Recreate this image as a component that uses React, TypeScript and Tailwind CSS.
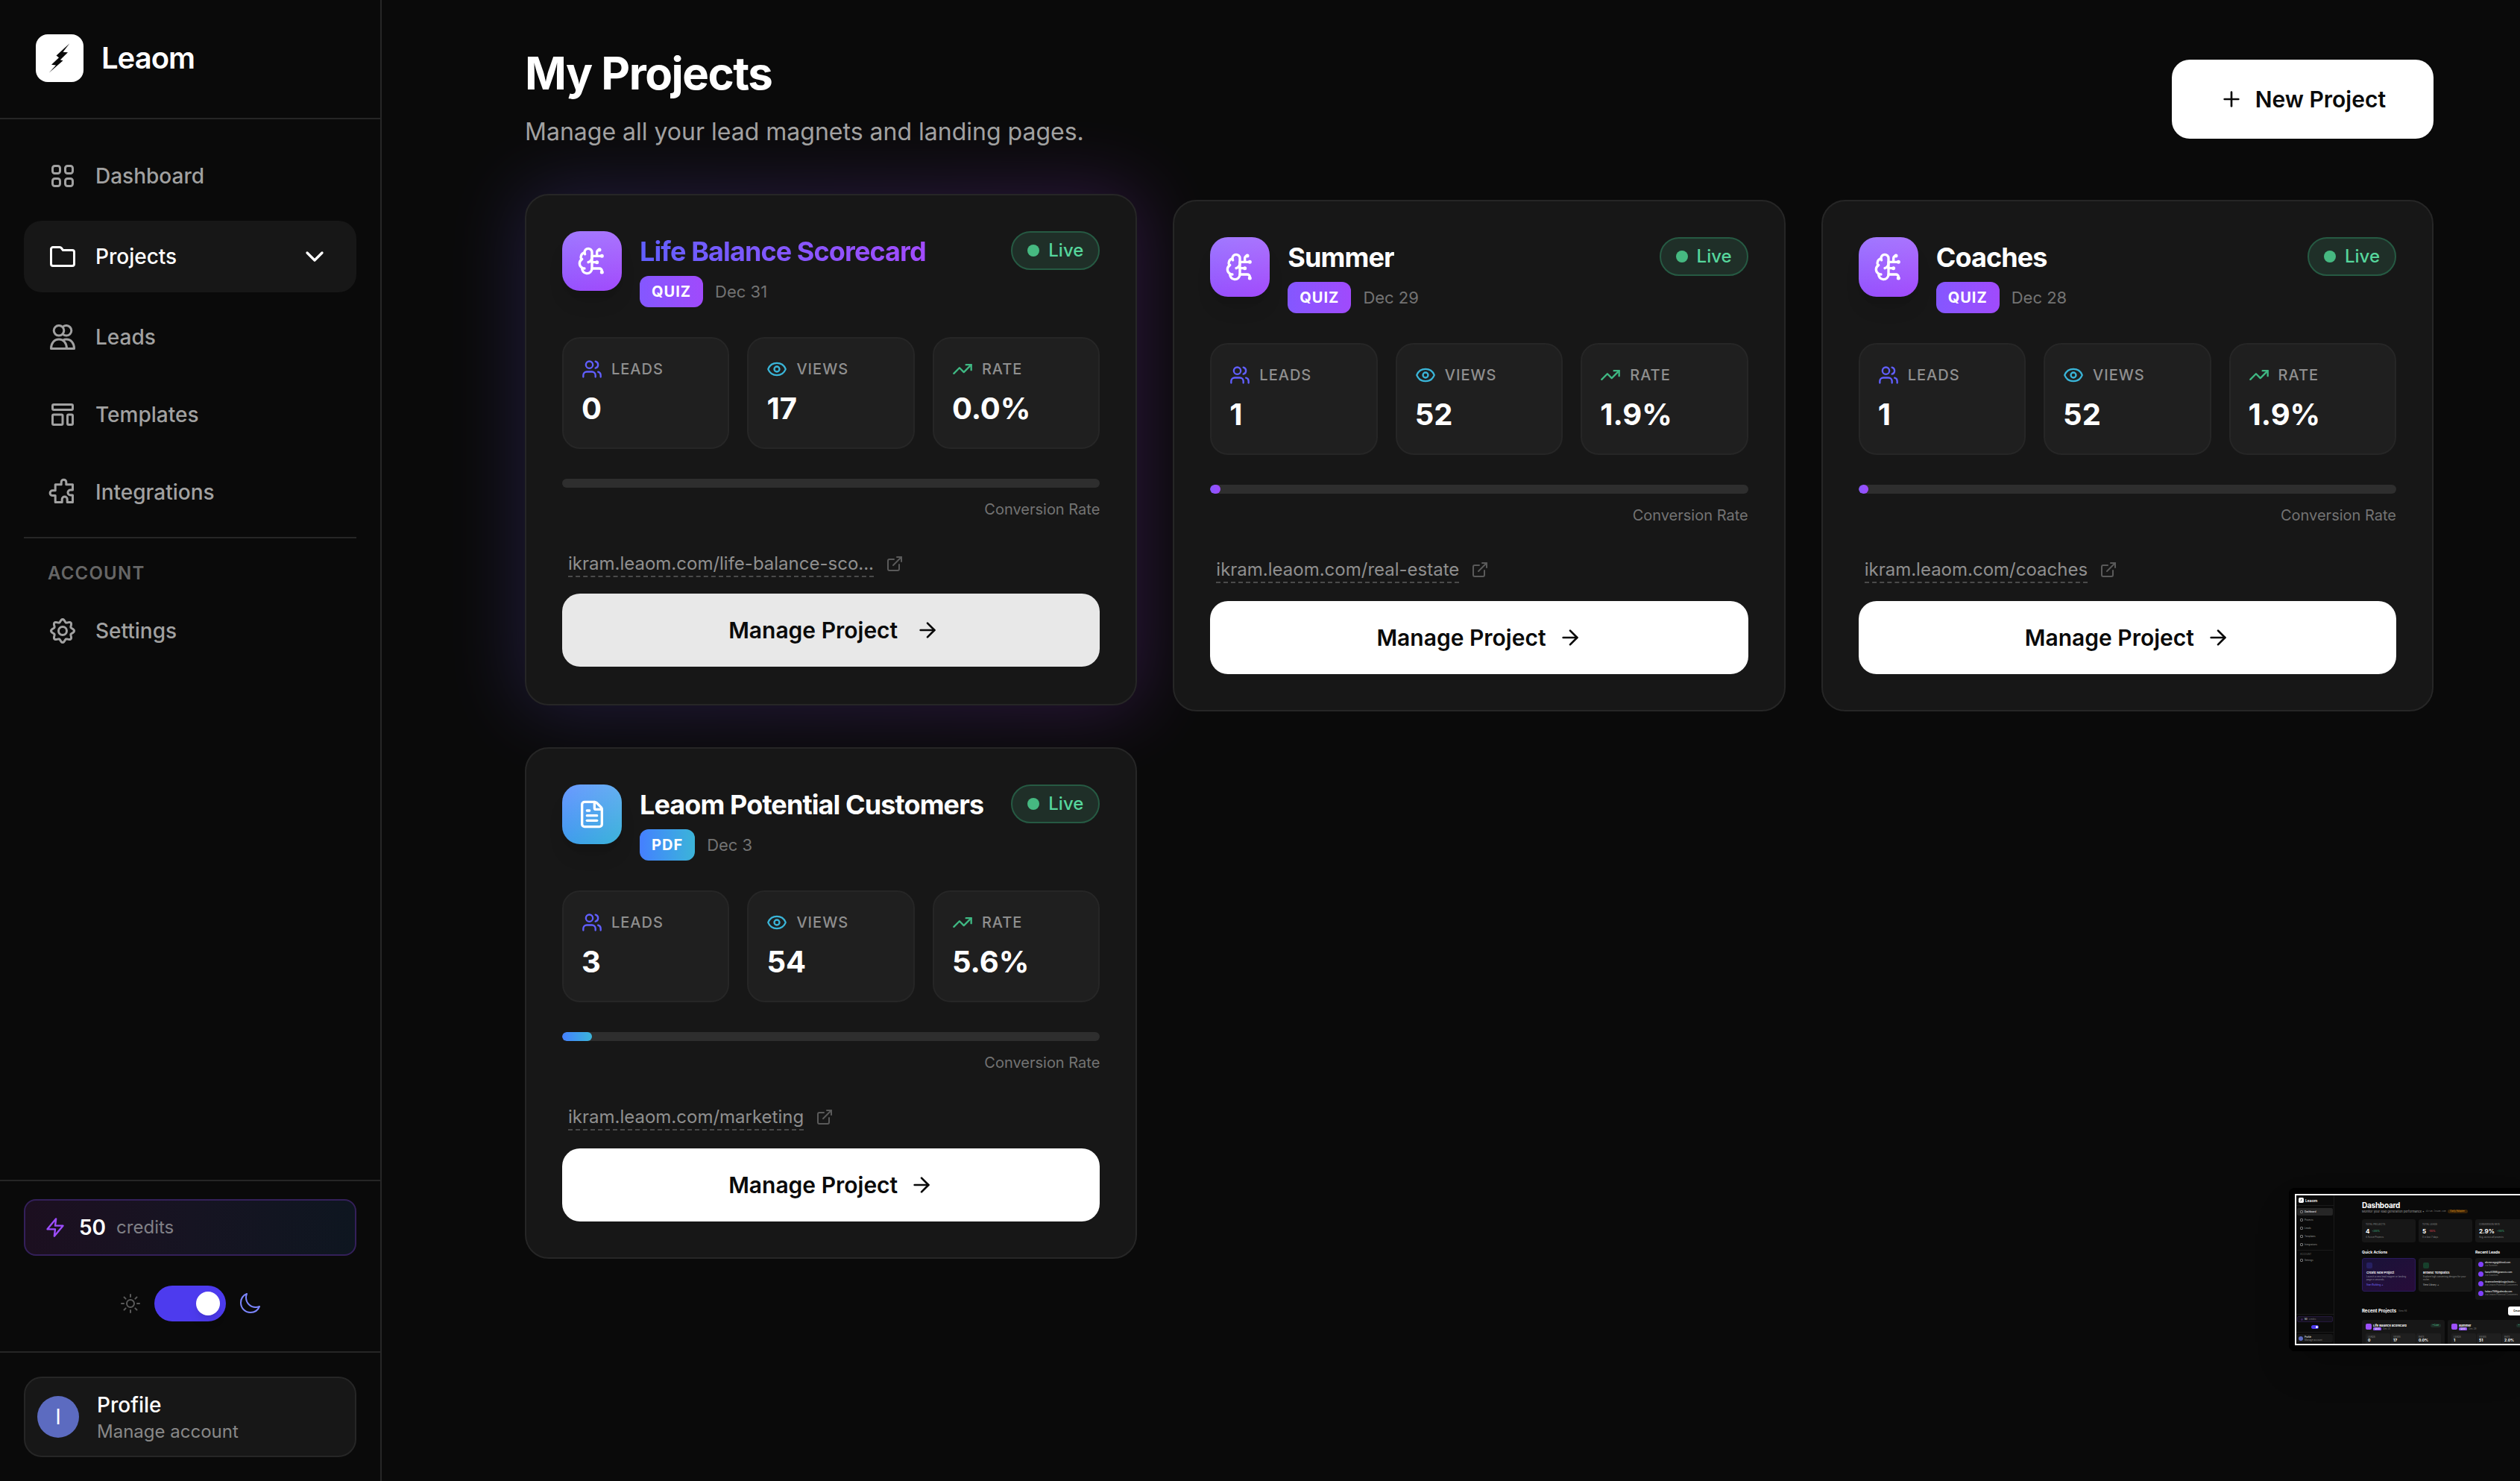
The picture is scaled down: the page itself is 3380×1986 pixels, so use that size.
import { ReactNode, useState } from 'react';
import {
  ArrowRight,
  BrainCircuit,
  ChevronDown,
  ExternalLink,
  Eye,
  FileText,
  Plus,
  TrendingUp,
  Users,
} from 'lucide-react';
import { HiOutlineMoon, HiOutlineSun } from 'react-icons/hi2';

type ProjectKind = 'quiz' | 'pdf';

interface Project {
  id: string;
  title: string;
  kind: ProjectKind;
  date: string;
  leads: number;
  views: number;
  rate: number;
  url: string;
  hovered?: boolean;
}

const projects: Project[] = [
  {
    id: 'life-balance',
    title: 'Life Balance Scorecard',
    kind: 'quiz',
    date: 'Dec 31',
    leads: 0,
    views: 17,
    rate: 0,
    url: 'ikram.leaom.com/life-balance-sco...',
    hovered: true,
  },
  {
    id: 'summer',
    title: 'Summer',
    kind: 'quiz',
    date: 'Dec 29',
    leads: 1,
    views: 52,
    rate: 1.9,
    url: 'ikram.leaom.com/real-estate',
  },
  {
    id: 'coaches',
    title: 'Coaches',
    kind: 'quiz',
    date: 'Dec 28',
    leads: 1,
    views: 52,
    rate: 1.9,
    url: 'ikram.leaom.com/coaches',
  },
  {
    id: 'potential-customers',
    title: 'Leaom Potential Customers',
    kind: 'pdf',
    date: 'Dec 3',
    leads: 3,
    views: 54,
    rate: 5.6,
    url: 'ikram.leaom.com/marketing',
  },
];

/* ---------- Icons ---------- */

function NavIcon({ children }: { children: ReactNode }) {
  return (
    <svg
      viewBox="0 0 40 40"
      className="w-10 h-10 shrink-0"
      fill="none"
      stroke="currentColor"
      strokeWidth="3"
      strokeLinecap="round"
      strokeLinejoin="round"
      aria-hidden="true"
    >
      {children}
    </svg>
  );
}

const gearPoints = Array.from({ length: 96 }, (_, i) => {
  const a = (i / 96) * Math.PI * 2;
  const r = 13.7 + 1.8 * Math.cos(a * 8);
  return `${(20 + r * Math.cos(a)).toFixed(2)},${(20 + r * Math.sin(a)).toFixed(2)}`;
}).join(' ');

const icons = {
  dashboard: (
    <NavIcon>
      <rect x="6.5" y="6.5" width="10" height="10" rx="3" />
      <rect x="23.5" y="6.5" width="10" height="10" rx="3" />
      <rect x="6.5" y="23.5" width="10" height="10" rx="3" />
      <rect x="23.5" y="23.5" width="10" height="10" rx="3" />
    </NavIcon>
  ),
  projects: (
    <NavIcon>
      <path d="M4.5 10A2.5 2.5 0 0 1 7 7.5H16.2A2.5 2.5 0 0 1 18.2 8.5L20.5 11.5H33A2.5 2.5 0 0 1 35.5 14V30A2.5 2.5 0 0 1 33 32.5H7A2.5 2.5 0 0 1 4.5 30Z" />
    </NavIcon>
  ),
  leads: (
    <NavIcon>
      <circle cx="15" cy="11.3" r="6.8" />
      <path d="M20.5 6.2A6.8 6.8 0 1 1 20.5 16.4" />
      <path d="M4.5 35.5C4.5 28.5 8.5 23 15 23S25.5 28.5 25.5 35.5Z" />
      <path d="M20.5 24.2C21.8 23.4 23.3 23 25 23C31.5 23 35.5 28.5 35.5 35.5H25.5" />
    </NavIcon>
  ),
  templates: (
    <NavIcon>
      <rect x="6.5" y="6.5" width="27" height="7" rx="1.5" />
      <rect x="6.5" y="20" width="13.5" height="13.5" rx="1.5" />
      <rect x="26.5" y="20" width="7" height="13.5" rx="1.5" />
    </NavIcon>
  ),
  integrations: (
    <NavIcon>
      <path d="M10.2 9.8H18.2V6.5A3.3 3.3 0 0 1 24.8 6.5V9.8H33.5V17H30.5A3.5 3.5 0 0 0 30.5 24H33.5V33.5H26.2V29.5A3.5 3.5 0 0 0 19.2 29.5V33.5H10.2V24.6H6.5A3.4 3.4 0 0 1 6.5 17.8H10.2Z" />
    </NavIcon>
  ),
  settings: (
    <NavIcon>
      <polygon points={gearPoints} />
      <circle cx="20" cy="20" r="5.5" />
    </NavIcon>
  ),
};

function LogoMark({ className }: { className: string }) {
  return (
    <svg viewBox="0 0 64 64" className={className} aria-hidden="true">
      <rect width="64" height="64" rx="16" fill="#fff" />
      <polygon
        points="45.3,12.3 36.5,23.8 43,24.3 32.8,34.3 36.5,35.3 17.6,51.7 27,41.5 21,40.8 31,31.3 27.5,28.5"
        fill="#0a0a0a"
      />
    </svg>
  );
}

function BoltIcon({ className }: { className: string }) {
  return (
    <svg
      viewBox="0 0 24 24"
      className={className}
      fill="none"
      stroke="currentColor"
      strokeWidth="2"
      strokeLinecap="round"
      strokeLinejoin="round"
      aria-hidden="true"
    >
      <polygon points="13 2 3 14 12 14 11 22 21 10 12 10 13 2" />
    </svg>
  );
}

/* ---------- Sidebar ---------- */

function NavLink({ icon, label }: { icon: ReactNode; label: string }) {
  return (
    <a
      href="#"
      className="flex items-center gap-6 h-24 px-8 rounded-3xl text-[28px] font-medium text-[#a1a1a1] hover:text-white transition-colors"
    >
      {icon}
      {label}
    </a>
  );
}

function Sidebar() {
  const [dark, setDark] = useState(true);

  return (
    <aside className="sticky top-0 flex flex-col w-[512px] h-screen shrink-0 border-r-2 border-[#262626]">
      <div className="flex items-center gap-6 h-40 px-12 pb-0.5 border-b-2 border-[#262626]">
        <LogoMark className="w-16 h-16" />
        <span className="text-[40px] font-semibold tracking-tight">Leaom</span>
      </div>

      <nav className="flex flex-col gap-2 px-8 pt-7 grow">
        <NavLink icon={icons.dashboard} label="Dashboard" />
        <div className="my-1 flex items-center h-24 px-8 rounded-3xl bg-[#171717]">
          <a href="#" className="flex items-center gap-6 grow text-[28px] font-medium">
            {icons.projects}
            Projects
          </a>
          <button aria-label="Expand projects" className="p-1">
            <ChevronDown size={40} strokeWidth={2} />
          </button>
        </div>
        <NavLink icon={icons.leads} label="Leads" />
        <NavLink icon={icons.templates} label="Templates" />
        <NavLink icon={icons.integrations} label="Integrations" />

        <div className="mt-1 border-t-2 border-[#262626] pt-7">
          <h2 className="px-8 pb-2.5 text-[24px] leading-[38px] font-semibold tracking-wider text-[#666666]">
            ACCOUNT
          </h2>
          <NavLink icon={icons.settings} label="Settings" />
        </div>
      </nav>

      {/* Credits and theme */}
      <div className="px-8 pt-6 pb-10 border-t-2 border-[#262626]">
        <div className="flex items-center h-[76px] px-[26px] rounded-2xl border-2 border-[#34205a] bg-linear-to-r from-[#1c0f20] via-[#161422] to-[#0e1620]">
          <BoltIcon className="w-7 h-7 text-[#9d4dff]" />
          <span className="ml-4.5 text-[28px] font-semibold">50</span>
          <span className="ml-3.5 text-[24px] text-[#808086]">credits</span>
        </div>
        <div className="mt-10 flex items-center justify-center gap-4">
          <HiOutlineSun size={32} className="text-[#5a5a5a]" />
          <button
            role="switch"
            aria-checked={dark}
            aria-label="Dark mode"
            onClick={() => setDark(!dark)}
            className={`flex items-center w-24 h-12 px-2 rounded-full bg-[#4d3bee] ${dark ? 'justify-end' : 'justify-start'}`}
          >
            <span className="w-8 h-8 rounded-full bg-white shadow-lg" />
          </button>
          <HiOutlineMoon size={32} className="text-[#7c86ff]" />
        </div>
      </div>

      {/* Profile */}
      <div className="p-8 border-t-2 border-[#262626]">
        <button className="flex items-center gap-6 w-full h-[108px] px-4 rounded-3xl border-2 border-[#262626] bg-[#171717] text-left">
          <span className="flex items-center justify-center w-14 h-14 rounded-full bg-[#5c6bc0] text-[28px]">
            I
          </span>
          <span className="flex flex-col pt-1">
            <span className="text-[28px] leading-9 font-medium">Profile</span>
            <span className="text-[24px] leading-9 text-[#888888]">Manage account</span>
          </span>
        </button>
      </div>
    </aside>
  );
}

/* ---------- Project card ---------- */

const kindStyles = {
  quiz: {
    label: 'QUIZ',
    icon: BrainCircuit,
    tile: 'from-[#8757ff] to-[#a34afc]',
    bar: 'from-[#8457ff] to-[#a04afc]',
  },
  pdf: {
    label: 'PDF',
    icon: FileText,
    tile: 'from-[#457fff] to-[#3cb4d8]',
    bar: 'from-[#457fff] to-[#3cb4d8]',
  },
};

interface StatProps {
  icon: ReactNode;
  label: string;
  value: string | number;
}

function Stat({ icon, label, value }: StatProps) {
  return (
    <div className="p-6 rounded-3xl border-2 border-[#262626] bg-[#1f1f1f]">
      <div className="flex items-center gap-3 text-[20px] leading-[34px] font-medium tracking-wider text-[#8f8f8f]">
        {icon}
        {label}
      </div>
      <div className="mt-2 text-[40px] leading-[56px] font-bold">{value}</div>
    </div>
  );
}

function ProjectCard({ project }: { project: Project }) {
  const { title, kind, date, leads, views, rate, url, hovered } = project;
  const style = kindStyles[kind];
  const Icon = style.icon;

  return (
    <article className={`relative ${hovered ? '-translate-y-2' : ''}`}>
      {/* Glow */}
      {hovered && (
        <div className="absolute -inset-2 rounded-[40px] bg-linear-to-r from-[#6f5cf0] to-[#b044ff] opacity-20 blur-[48px]" />
      )}

      <div className="relative p-12 rounded-[32px] border-2 border-[#262626] bg-[#171717]">
        <div className="flex items-start gap-6">
          <div className={`w-20 h-20 shrink-0 rounded-3xl shadow-xl bg-linear-to-br ${style.tile}`}>
            <div className="flex items-center justify-center w-full h-full rounded-3xl bg-linear-to-b from-white/20 to-transparent">
              <Icon size={40} strokeWidth={2} />
            </div>
          </div>
          <div className="min-w-0 grow">
            <h3
              className={`w-fit max-w-full truncate text-[36px] leading-[54px] font-bold tracking-tight ${
                hovered
                  ? 'bg-linear-to-r from-[#615fff] to-[#a24bff] bg-clip-text text-transparent'
                  : ''
              }`}
            >
              {title}
            </h3>
            <div className="mt-1.5 flex items-center gap-4">
              <span
                className={`px-4 rounded-xl text-[20px] leading-[42px] font-bold tracking-wider bg-linear-to-r ${style.bar}`}
              >
                {style.label}
              </span>
              <span className="text-[22px] leading-[42px] text-[#737373]">{date}</span>
            </div>
          </div>
          <span className="flex items-center gap-3 h-[52px] px-5 shrink-0 rounded-full border-2 border-[#265a43] bg-[#1f2f28] text-[24px] font-medium text-[#56d69c]">
            <span className="w-4 h-4 rounded-full bg-[#46b981]" />
            Live
          </span>
        </div>

        <div className="mt-10 grid grid-cols-3 gap-6">
          <Stat icon={<Users size={28} className="text-[#615fff]" />} label="LEADS" value={leads} />
          <Stat icon={<Eye size={28} className="text-[#3ab5d8]" />} label="VIEWS" value={views} />
          <Stat
            icon={<TrendingUp size={28} className="text-[#3fb883]" />}
            label="RATE"
            value={`${rate.toFixed(1)}%`}
          />
        </div>

        <div className="mt-10 h-3 rounded-full bg-[#2e2e2e] overflow-hidden">
          <div
            className={`h-full rounded-full bg-linear-to-r ${style.bar}`}
            style={{ width: `${rate}%` }}
          />
        </div>
        <p className="mt-3.5 text-right text-[20px] leading-[30px] text-[#737373]">Conversion Rate</p>

        <div className="mt-10 px-2 flex items-center gap-4">
          <a
            href="#"
            className="pt-0.5 border-b-2 border-dashed border-[#4a4a4a] text-[24px] leading-8 text-[#8f8f8f]"
          >
            {url}
          </a>
          <ExternalLink size={24} className="shrink-0 text-[#5a5a5a]" />
        </div>

        <button
          className={`mt-6 flex items-center justify-center gap-4 w-full h-[98px] rounded-3xl text-[30px] font-semibold text-[#0a0a0a] ${
            hovered ? 'bg-[#e8e8e8] -translate-y-0.5' : 'bg-white'
          }`}
        >
          Manage Project
          <ArrowRight size={32} className={hovered ? 'translate-x-2' : ''} />
        </button>
      </div>
    </article>
  );
}

/* ---------- Floating preview of the dashboard ---------- */

const previewNav = ['Projects', 'Leads', 'Templates', 'Integrations'];

const previewStats = [
  { label: 'TOTAL PROJECTS', value: '4', change: '+300%', note: '4 Active Projects', tone: 'text-[#3fb883]' },
  { label: 'TOTAL LEADS', value: '5', change: '-100%', note: '0 in last 7 days', tone: 'text-[#e0465a]' },
  { label: 'CONVERSION RATE', value: '2.9%', change: '+100%', note: 'Avg. across all projects', tone: 'text-[#3fb883]' },
];

const previewLeads = [
  { email: 'akcmnrzgp@bltiwd.com', source: 'via Summer' },
  { email: 'haniz50986@nanxtx.com', source: 'via Coaches' },
  { email: 'ikramrasheedplus@icloud.c...', source: 'via Leaom Potential Customers' },
  { email: 'halaco7598@alexida.com', source: 'via Leaom Potential Customers' },
];

const previewProjects = [
  { title: 'Life Balance Scorecard', date: 'Dec 31', values: ['0', '17', '0.0%'] },
  { title: 'Summer', date: 'Dec 29', values: ['1', '51', '2.0%'] },
];

function PreviewDot() {
  return <span className="w-1 h-1 rounded-[1px] border border-[#777777]" />;
}

function Preview() {
  return (
    <div className="fixed right-0 bottom-[174px] w-[310px] overflow-hidden rounded-l-lg border-8 border-r-0 border-black shadow-2xl">
      <div className="flex w-[345px] h-[203px] border-2 border-white bg-[#0a0a0a] text-[3px] leading-[4px]">
        <div className="flex flex-col w-[51px] shrink-0 border-r border-[#1a1a1a]">
          <div className="flex items-center gap-0.5 h-[14px] pl-[3px] border-b border-[#1a1a1a] text-[5px] font-semibold">
            <LogoMark className="w-[7px] h-[7px]" />
            Leaom
          </div>
          <div className="flex flex-col gap-px px-px pt-[3px] grow text-[#999999]">
            <div className="flex items-center gap-0.5 h-[10px] pl-1 rounded-[2px] bg-[#262626] text-white">
              <PreviewDot />
              Dashboard
            </div>
            {previewNav.map((name) => (
              <div key={name} className="flex items-center gap-0.5 h-[10px] pl-1">
                <PreviewDot />
                {name}
              </div>
            ))}
            <div className="mt-px pt-[3px] pl-1 border-t border-[#1a1a1a] text-[#666666]">ACCOUNT</div>
            <div className="flex items-center gap-0.5 h-[10px] pl-1">
              <PreviewDot />
              Settings
            </div>
          </div>
          <div className="px-px pt-0.5 pb-1 border-t border-[#1a1a1a]">
            <div className="flex items-center gap-0.5 h-2 pl-1 rounded-[2px] border border-[#24183c] bg-[#14111c]">
              <BoltIcon className="w-[3px] h-[3px] text-[#9d4dff]" />
              50
              <span className="text-[#777777]">credits</span>
            </div>
            <div className="mx-auto mt-1 flex justify-end items-center w-[10px] h-[5px] pr-px rounded-full bg-[#4d3bee]">
              <span className="w-[3px] h-[3px] rounded-full bg-white" />
            </div>
          </div>
          <div className="px-px pt-0.5 pb-0.5 border-t border-[#1a1a1a]">
            <div className="flex items-center gap-0.5 h-[11px] pl-0.5 rounded-[2px] bg-[#171717]">
              <span className="w-[6px] h-[6px] rounded-full bg-[#5c6bc0]" />
              <span className="flex flex-col">
                Profile
                <span className="text-[#888888]">Manage account</span>
              </span>
            </div>
          </div>
        </div>

        <div className="flex flex-col grow pl-[37px] pt-[7px] overflow-hidden">
          <div className="text-[10px] leading-[12px] font-bold tracking-tight">Dashboard</div>
          <div className="flex items-center gap-0.5 h-2 text-[4px] text-[#a1a1a1] whitespace-nowrap">
            Monitor your lead generation performance •
            <span className="font-['Liberation_Mono',monospace] text-[3px] text-[#777777]">ikram.leaom.com</span>
            <span className="px-1 rounded-full bg-[#3a2408] text-[3px] leading-[5px] text-[#e09a1a]">
              Early Adopter
            </span>
          </div>

          <div className="mt-2 grid grid-cols-[72px_72px_72px] gap-1">
            {previewStats.map((stat) => (
              <div key={stat.label} className="h-[31px] px-[5px] pt-[5px] rounded-[3px] bg-[#171717] text-[#888888]">
                {stat.label}
                <div className="flex items-center gap-[3px] h-[13px]">
                  <span className="text-[8px] font-bold text-white">{stat.value}</span>
                  <span className={stat.tone}>{stat.change}</span>
                </div>
                {stat.note}
              </div>
            ))}
          </div>

          <div className="mt-2.5 grid grid-cols-[148px_72px] gap-x-1 gap-y-[5px]">
            <div className="text-[5px] leading-[6px] font-bold">Quick Actions</div>
            <div className="text-[5px] leading-[6px] font-bold">Recent Leads</div>
            <div className="grid grid-cols-2 gap-1 h-[45px]">
              <div className="px-[5px] pt-[5px] rounded-[3px] border border-[#2a1a5c] bg-linear-to-br from-[#181238] to-[#280c3a] text-[#8f8f9f]">
                <div className="w-2 h-2 rounded-[2px] bg-[#262062]" />
                <div className="mt-[3px] text-[4px] leading-[6px] font-semibold text-white">Create New Project</div>
                Launch a new lead magnet or landing page in seconds.
                <div className="mt-[3px] text-[#7c6fff]">Start Building →</div>
              </div>
              <div className="px-[5px] pt-[5px] rounded-[3px] border border-[#1c1c1c] bg-[#171717] text-[#8f8f8f]">
                <div className="w-2 h-2 rounded-[2px] bg-[#17402c]" />
                <div className="mt-[3px] text-[4px] leading-[6px] font-semibold text-white">Browse Templates</div>
                Explore high converting designs for your niche.
                <div className="mt-[3px] text-[#c0c0c0]">View Library →</div>
              </div>
            </div>
            <div className="flex flex-col gap-[5px] h-[56px] px-1 pt-1 rounded-[3px] bg-[#171717]">
              {previewLeads.map((lead) => (
                <div key={lead.email} className="flex items-center gap-0.5 h-2 whitespace-nowrap">
                  <span className="w-[7px] h-[7px] rounded-full bg-[#8040ff]" />
                  <span className="flex flex-col">
                    {lead.email}
                    <span className="text-[#777777]">{lead.source}</span>
                  </span>
                </div>
              ))}
            </div>
          </div>

          <div className="mt-[9px] flex items-center gap-[3px] h-3 text-[6px] font-bold">
            Recent Projects
            <span className="text-[3px] font-normal text-[#777777]">View All</span>
            <span className="ml-auto mr-5 pl-[7px] pr-5 rounded-[3px] bg-white text-[3px] leading-[12px] text-black">
              Create
            </span>
          </div>
          <div className="mt-1.5 grid grid-cols-[111px_111px] gap-1">
            {previewProjects.map((item) => (
              <div key={item.title} className="px-[5px] pt-[5px] rounded-t-[3px] bg-[#171717]">
                <div className="flex gap-0.5">
                  <span className="w-2 h-2 rounded-[2px] bg-[#9d50ff]" />
                  <div className="grow">
                    <div className="text-[4px] leading-[5px] font-bold">{item.title}</div>
                    <span className="mt-px px-0.5 rounded-[1px] bg-[#8f50ff]">QUIZ</span>
                    <span className="ml-0.5 text-[#777777]">{item.date}</span>
                  </div>
                  <span className="h-[5px] px-[3px] rounded-full bg-[#1f2f28] text-[#56d69c]">• Live</span>
                </div>
                <div className="mt-1 grid grid-cols-3 gap-px">
                  {item.values.map((value, index) => (
                    <div key={index} className="h-4 pl-[3px] pt-[3px] rounded-t-[2px] bg-[#1f1f1f] text-[#888888]">
                      {['LEADS', 'VIEWS', 'RATE'][index]}
                      <div className="text-[5px] leading-[5px] font-bold text-white">{value}</div>
                    </div>
                  ))}
                </div>
              </div>
            ))}
          </div>
        </div>
      </div>
    </div>
  );
}

/* ---------- Page ---------- */

export default function App() {
  return (
    <div className="flex min-h-screen bg-[#0a0a0a] text-white font-['Inter',sans-serif]">
      <Sidebar />

      <main className="grow min-w-0 pt-16 pb-16 pl-48 pr-[116px]">
        <header className="relative z-10 flex items-center justify-between">
          <div>
            <h1 className="text-[60px] leading-[68px] font-bold tracking-tight">My Projects</h1>
            <p className="mt-5 text-[32px] leading-[50px] text-[#a1a1a1]">
              Manage all your lead magnets and landing pages.
            </p>
          </div>
          <button className="flex items-center gap-4 h-[106px] px-16 rounded-3xl bg-white text-[30px] font-semibold text-[#0a0a0a]">
            <Plus size={32} />
            New Project
          </button>
        </header>

        <section className="mt-[66px] grid grid-cols-3 gap-12">
          {projects.map((project) => (
            <ProjectCard key={project.id} project={project} />
          ))}
        </section>
      </main>

      <Preview />
    </div>
  );
}
